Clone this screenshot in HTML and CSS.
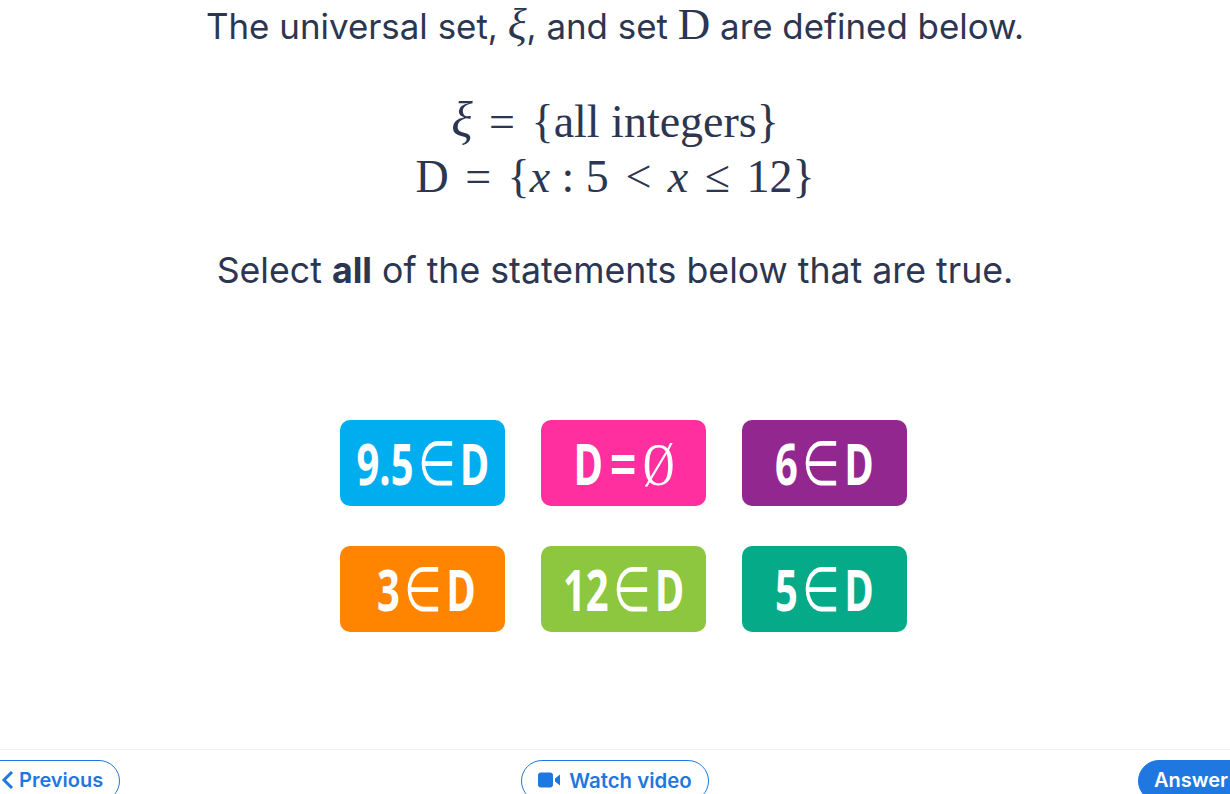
FILE: index.html
```html
<!DOCTYPE html>
<html lang="en">
<head>
    <meta charset="UTF-8">
    <title>Question</title>
    <link rel="stylesheet" href="styles.css">
</head>
<body>
    <div class="question">
        <p class="intro">The universal set, <span class="math"><i>ξ</i></span>, and set <span class="math big">D</span> are defined below.</p>
        <div class="formula">
            <div class="formula-line"><i class="xi">ξ</i> <span class="rel">=</span> {all integers}</div>
            <div class="formula-line">D <span class="rel">=</span> {<i>x</i> : 5 <span class="rel">&lt;</span> <i>x</i> <span class="rel">≤</span> 12}</div>
        </div>
        <p class="prompt">Select <b>all</b> of the statements below that are true.</p>
    </div>
    <div class="choices">
        <button class="choice blue"><span class="narrow">9.5<span class="sym">∈</span>D</span></button>
        <button class="choice pink"><span class="narrow">D<span class="eq">=</span><span class="sym empty">Ø</span></span></button>
        <button class="choice purple"><span class="narrow">6<span class="sym">∈</span>D</span></button>
        <button class="choice orange shifted"><span class="narrow">3<span class="sym">∈</span>D</span></button>
        <button class="choice green"><span class="narrow">12<span class="sym">∈</span>D</span></button>
        <button class="choice teal"><span class="narrow">5<span class="sym">∈</span>D</span></button>
    </div>
    <div class="footer">
        <a class="btn prev">
            <svg width="13" height="18" viewBox="0 0 13 18"><path d="M11 1 L3 9 L11 17" fill="none" stroke="#1f78e0" stroke-width="3"/></svg>
            Previous
        </a>
        <a class="btn video">
            <svg width="23" height="16" viewBox="0 0 23 16"><rect x="0" y="0.5" width="15" height="15" rx="3" fill="#1f78e0"/><path d="M17 6.5 L22 2.5 V13.5 L17 9.5 Z" fill="#1f78e0"/></svg>
            Watch video
        </a>
        <a class="btn answer">Answer</a>
    </div>
</body>
</html>
```

FILE: styles.css
```css
html, body {
    margin: 0;
    height: 794px;
    overflow: hidden;
    background: #fff;
}
body {
    font-family: "Inter", "Open Sans", sans-serif;
    color: #2c3650;
    position: relative;
}
.question {
    text-align: center;
}
.intro {
    margin: 0;
    padding-top: 3px;
    font-size: 34.9px;
    line-height: 46px;
    font-weight: 400;
}
.math {
    font-family: "Liberation Serif", serif;
    font-size: 44px;
    line-height: 0;
}
.math.big {
    font-size: 45px;
}
.formula {
    margin-top: 45px;
    font-family: "Liberation Serif", serif;
    font-size: 46px;
    line-height: 55px;
}
.xi {
    font-size: 50px;
    line-height: 0;
}
.rel {
    font-weight: 400;
    margin: 0 5px;
}
.prompt {
    margin: 43px 0 0;
    font-size: 35.7px;
    line-height: 46px;
}
.choices {
    display: grid;
    grid-template-columns: repeat(3, 165px);
    grid-auto-rows: 86px;
    column-gap: 36px;
    row-gap: 40px;
    justify-content: center;
    margin-top: 127px;
    padding-left: 17px;
}
.choice {
    border: 0;
    border-radius: 10px;
    color: #fff;
    padding: 0;
    font-family: "Open Sans", sans-serif;
    font-weight: 700;
    font-size: 57px;
    line-height: 78px;
    display: flex;
    align-items: center;
    justify-content: center;
}
.narrow {
    display: inline-block;
    transform: scaleX(0.7);
    white-space: nowrap;
}
.sym {
    font-family: "DejaVu Sans", "Liberation Serif", serif;
    font-weight: 200;
    font-size: 62px;
    line-height: 0;
    margin: 0 6px;
}
.sym.empty {
    font-family: "Liberation Serif", serif;
    font-size: 62px;
    margin: 0;
}
.eq {
    font-weight: 600;
    font-size: 68px;
    line-height: 0;
    vertical-align: -4px;
    margin: 0 9px;
}
.shifted {
    padding-left: 7px;
}
.blue { background: #00aeef; }
.pink { background: #ff2fa0; }
.purple { background: #92278f; }
.orange { background: #ff8500; }
.green { background: #8dc63f; }
.teal { background: #05ab88; }
.footer {
    position: absolute;
    left: 0;
    right: 0;
    top: 749px;
    height: 60px;
    border-top: 1px solid #eef1f6;
    display: grid;
    grid-template-columns: 1fr auto 1fr;
    align-items: start;
    padding-top: 10px;
}
.btn {
    display: flex;
    align-items: center;
    gap: 8px;
    height: 38px;
    padding-bottom: 2px;
    border: 1px solid #1f78e0;
    border-radius: 22px;
    font-size: 20px;
    font-weight: 600;
    color: #1f78e0;
    white-space: nowrap;
}
.prev {
    justify-self: start;
    margin-left: -24px;
    padding-left: 24px;
    padding-right: 16px;
    gap: 5px;
}
.video {
    padding-left: 16px;
    padding-right: 16px;
    font-size: 20.4px;
}
.answer {
    justify-self: end;
    margin-right: -30px;
    padding-left: 15px;
    padding-right: 31px;
    background: #1f78e0;
    color: #fff;
}
```
